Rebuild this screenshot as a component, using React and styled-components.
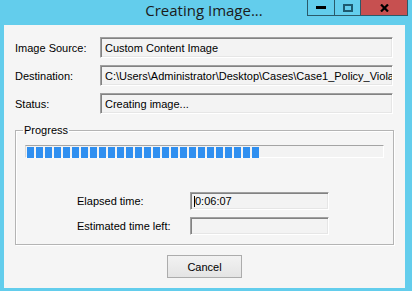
import React from "react";
import styled, { createGlobalStyle } from "styled-components";

const Global = createGlobalStyle`
  html, body { margin: 0; padding: 0; background: #63cdec; }
  * { box-sizing: border-box; }
`;

const Frame = styled.div`
  width: 412px;
  height: 291px;
  background: #63cdec;
  overflow: hidden;
  display: flex;
  flex-direction: column;
`;

const TitleBar = styled.div`
  height: 25px;
  display: grid;
  grid-template-columns: 1fr auto 1fr;
  align-items: start;
  padding-right: 4px;
`;

const Title = styled.div`
  grid-column: 2;
  font-family: "Open Sans", "Liberation Sans", sans-serif;
  font-size: 15px;
  line-height: 20px;
  color: #1b1b1b;
  white-space: nowrap;
`;

const Controls = styled.div`
  grid-column: 3;
  justify-self: end;
  display: flex;
  height: 16px;
  border: 1px solid #2a5a6a;
  border-top: none;
`;

const CtlButton = styled.div`
  width: ${(p) => p.$w}px;
  height: 15px;
  background: ${(p) => (p.$close ? "#c75050" : "transparent")};
  border-left: ${(p) => (p.$first ? "none" : "1px solid #2a5a6a")};
  display: flex;
  align-items: center;
  justify-content: center;
`;

const Client = styled.div`
  margin-left: 4px;
  width: 401px;
  height: 263px;
  background: #f5f5f5;
  display: flex;
  flex-direction: column;
  padding: 12px 11px 0 11px;
  font-family: "Liberation Sans", Arial, sans-serif;
  font-size: 11px;
  color: #000;
`;

const FieldGrid = styled.div`
  display: grid;
  grid-template-columns: 85px 1fr;
  row-gap: 7px;
  align-items: center;
  margin-right: 1px;
`;

const Label = styled.div`
  white-space: nowrap;
`;

const TextBox = styled.div`
  height: ${(p) => p.$h || 21}px;
  width: ${(p) => (p.$w ? p.$w + "px" : "auto")};
  border-top: 1px solid #a0a0a0;
  border-left: 1px solid #a0a0a0;
  border-right: 1px solid #ffffff;
  border-bottom: 1px solid #ffffff;
  box-shadow: inset 1px 1px 0 #828282, inset -1px -1px 0 #e6e6e6;
  background: #f3f3f3;
  padding: 0 4px;
  display: flex;
  align-items: center;
  white-space: nowrap;
  overflow: hidden;
  position: relative;
`;

const Caret = styled.span`
  position: absolute;
  left: 3px;
  top: 3px;
  width: 1px;
  height: 11px;
  background: #000;
`;

const Group = styled.fieldset`
  margin: 10px 0 0 0;
  padding: 8px 9px 7px 9px;
  border: 1px solid #b4b4b4;
  box-shadow: inset 1px 1px 0 #fff, 1px 1px 0 #fff;
  min-width: 0;
  height: 121px;
`;

const Legend = styled.legend`
  margin-left: -2px;
  padding: 0 1px;
  font-size: 11px;
  line-height: 13px;
`;

const Track = styled.div`
  height: 13px;
  border-top: 1px solid #a4a4a4;
  border-left: 1px solid #d8d8d8;
  border-right: 1px solid #ffffff;
  border-bottom: 1px solid #ffffff;
  background: #f3f3f3;
  display: flex;
  gap: 2px;
  padding: 1px 0 0 1px;
`;

const Block = styled.div`
  width: 7px;
  height: 11px;
  background: #2f8ff0;
  flex: none;
`;

const TimeGrid = styled.div`
  display: grid;
  grid-template-columns: 113px 139px;
  row-gap: 7px;
  align-items: center;
  margin: 34px 0 0 52px;
`;

const ButtonRow = styled.div`
  display: flex;
  justify-content: center;
  margin-top: 10px;
`;

const PushButton = styled.button`
  width: 75px;
  height: 23px;
  border: 1px solid #acacac;
  background: linear-gradient(#f2f2f2, #e4e4e4);
  font-family: "Liberation Sans", Arial, sans-serif;
  font-size: 11px;
  color: #000;
  padding: 0;
`;

export default function App() {
  const blocks = Array.from({ length: 26 });
  return (
    <>
      <Global />
      <Frame>
        <TitleBar>
          <Title>Creating Image...</Title>
          <Controls>
            <CtlButton $w={26} $first>
              <svg width="10" height="3" viewBox="0 0 10 3">
                <rect x="0" y="0" width="10" height="3" fill="#000" />
              </svg>
            </CtlButton>
            <CtlButton $w={26}>
              <svg width="10" height="8" viewBox="0 0 10 8">
                <rect x="1" y="1" width="8" height="6" fill="none" stroke="#1d5a70" strokeWidth="2" />
              </svg>
            </CtlButton>
            <CtlButton $w={47} $close>
              <svg width="9" height="8" viewBox="0 0 9 8">
                <path d="M1 0.5 L8 7.5 M8 0.5 L1 7.5" stroke="#000" strokeWidth="2.2" />
              </svg>
            </CtlButton>
          </Controls>
        </TitleBar>
        <Client>
          <FieldGrid>
            <Label>Image Source:</Label>
            <TextBox>Custom Content Image</TextBox>
            <Label>Destination:</Label>
            <TextBox>C:\Users\Administrator\Desktop\Cases\Case1_Policy_Violation</TextBox>
            <Label>Status:</Label>
            <TextBox>Creating image...</TextBox>
          </FieldGrid>
          <Group>
            <Legend>Progress</Legend>
            <Track>
              {blocks.map((_, i) => (
                <Block key={i} />
              ))}
            </Track>
            <TimeGrid>
              <Label>Elapsed time:</Label>
              <TextBox $h={18} $w={139}>
                <Caret />
                0:06:07
              </TextBox>
              <Label>Estimated time left:</Label>
              <TextBox $h={18} $w={139}></TextBox>
            </TimeGrid>
          </Group>
          <ButtonRow>
            <PushButton>Cancel</PushButton>
          </ButtonRow>
        </Client>
      </Frame>
    </>
  );
}
